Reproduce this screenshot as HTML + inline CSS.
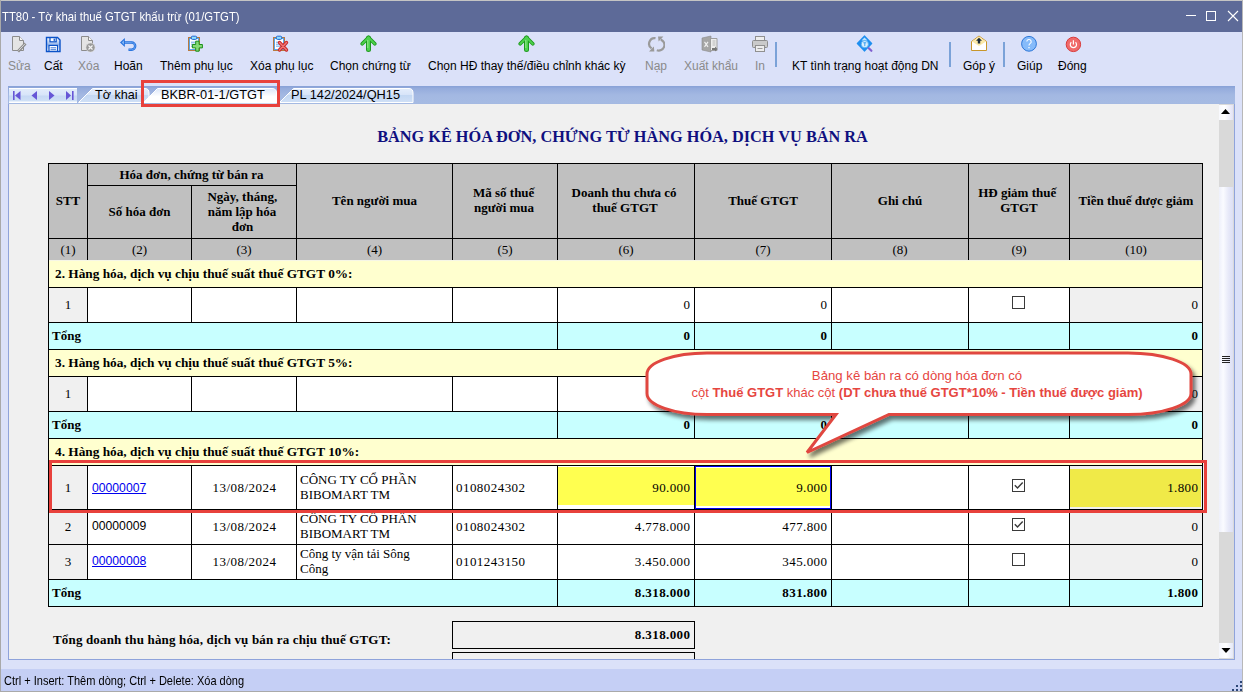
<!DOCTYPE html><html><head><meta charset="utf-8"><style>html,body{margin:0;padding:0;}body{width:1243px;height:692px;position:relative;overflow:hidden;background:#dbe1f9;}</style></head><body><div style="position:absolute;left:0px;top:0px;width:1243px;height:692px;background:#dbe1f9;"></div>
<div style="position:absolute;left:0px;top:0px;width:1243px;height:1px;background:#c4c4c4;"></div>
<div style="position:absolute;left:0px;top:0px;width:1px;height:692px;background:#a9a9a9;"></div>
<div style="position:absolute;left:1242px;top:0px;width:1px;height:692px;background:#b8b8b8;"></div>
<div style="position:absolute;left:1px;top:1px;width:1241px;height:31px;background:#5d6a98;"></div>
<div style="position:absolute;left:2px;top:10.67px;line-height:12.2px;font-family:'Liberation Sans', sans-serif;font-size:12.2px;font-weight:normal;color:#ffffff;white-space:nowrap;transform:scaleX(0.93);transform-origin:0 0;">TT80 - Tờ khai thuế GTGT khấu trừ (01/GTGT)</div>
<div style="position:absolute;left:1186px;top:15px;width:10px;height:1px;background:#ffffff;"></div>
<div style="position:absolute;left:1206px;top:11px;width:8px;height:8px;border:1px solid #fff"></div>
<svg style="position:absolute;left:1227px;top:10px" width="12" height="12"><path d="M1 1 L11 11 M11 1 L1 11" stroke="#fff" stroke-width="1.1"/></svg>
<div style="position:absolute;left:8px;top:59.84px;line-height:12px;font-family:'Liberation Sans', sans-serif;font-size:12px;font-weight:normal;color:#8a8a8a;white-space:nowrap;">Sửa</div>
<div style="position:absolute;left:44px;top:59.84px;line-height:12px;font-family:'Liberation Sans', sans-serif;font-size:12px;font-weight:normal;color:#000;white-space:nowrap;">Cất</div>
<div style="position:absolute;left:78px;top:59.84px;line-height:12px;font-family:'Liberation Sans', sans-serif;font-size:12px;font-weight:normal;color:#8a8a8a;white-space:nowrap;">Xóa</div>
<div style="position:absolute;left:114px;top:59.84px;line-height:12px;font-family:'Liberation Sans', sans-serif;font-size:12px;font-weight:normal;color:#000;white-space:nowrap;">Hoãn</div>
<div style="position:absolute;left:160px;top:59.84px;line-height:12px;font-family:'Liberation Sans', sans-serif;font-size:12px;font-weight:normal;color:#000;white-space:nowrap;">Thêm phụ lục</div>
<div style="position:absolute;left:250px;top:59.84px;line-height:12px;font-family:'Liberation Sans', sans-serif;font-size:12px;font-weight:normal;color:#000;white-space:nowrap;">Xóa phụ lục</div>
<div style="position:absolute;left:330px;top:59.84px;line-height:12px;font-family:'Liberation Sans', sans-serif;font-size:12px;font-weight:normal;color:#000;white-space:nowrap;">Chọn chứng từ</div>
<div style="position:absolute;left:428px;top:59.84px;line-height:12px;font-family:'Liberation Sans', sans-serif;font-size:12px;font-weight:normal;color:#000;white-space:nowrap;">Chọn HĐ thay thế/điều chỉnh khác kỳ</div>
<div style="position:absolute;left:645px;top:59.84px;line-height:12px;font-family:'Liberation Sans', sans-serif;font-size:12px;font-weight:normal;color:#8a8a8a;white-space:nowrap;">Nạp</div>
<div style="position:absolute;left:684px;top:59.84px;line-height:12px;font-family:'Liberation Sans', sans-serif;font-size:12px;font-weight:normal;color:#8a8a8a;white-space:nowrap;">Xuất khẩu</div>
<div style="position:absolute;left:755px;top:59.84px;line-height:12px;font-family:'Liberation Sans', sans-serif;font-size:12px;font-weight:normal;color:#8a8a8a;white-space:nowrap;">In</div>
<div style="position:absolute;left:792px;top:59.84px;line-height:12px;font-family:'Liberation Sans', sans-serif;font-size:12px;font-weight:normal;color:#000;white-space:nowrap;">KT tình trạng hoạt động DN</div>
<div style="position:absolute;left:963px;top:59.84px;line-height:12px;font-family:'Liberation Sans', sans-serif;font-size:12px;font-weight:normal;color:#000;white-space:nowrap;">Góp ý</div>
<div style="position:absolute;left:1017px;top:59.84px;line-height:12px;font-family:'Liberation Sans', sans-serif;font-size:12px;font-weight:normal;color:#000;white-space:nowrap;">Giúp</div>
<div style="position:absolute;left:1058px;top:59.84px;line-height:12px;font-family:'Liberation Sans', sans-serif;font-size:12px;font-weight:normal;color:#000;white-space:nowrap;">Đóng</div>
<div style="position:absolute;left:775px;top:42px;width:2px;height:25px;background:#7ba2d8;"></div>
<div style="position:absolute;left:949px;top:42px;width:2px;height:25px;background:#7ba2d8;"></div>
<div style="position:absolute;left:1003px;top:42px;width:2px;height:25px;background:#7ba2d8;"></div>
<svg style="position:absolute;left:10px;top:35px" width="18" height="18" viewBox="0 0 18 18"><path d="M2.5 1.5h7l4 4v10h-11z" fill="#e4e4e4" stroke="#8c8c8c"/><path d="M9.5 1.5v4h4" fill="#f6f6f6" stroke="#8c8c8c"/><path d="M8 16.5l7.5-8" stroke="#8c8c8c" stroke-width="2.8"/><path d="M8.6 15.6l6.6-7" stroke="#d8d8d8" stroke-width="1"/></svg>
<svg style="position:absolute;left:45px;top:36px" width="18" height="18" viewBox="0 0 18 18"><defs><linearGradient id="fg" x1="0" y1="0" x2="0" y2="1"><stop offset="0" stop-color="#ffffff"/><stop offset="0.5" stop-color="#98b8ea"/><stop offset="1" stop-color="#ffffff"/></linearGradient></defs><path d="M1.5 1.5h11l2.5 2.5v11.5h-13.5z" fill="url(#fg)" stroke="#0a52c8" stroke-width="1.4"/><rect x="5" y="1.6" width="6.2" height="4.2" fill="#fff" stroke="#0a52c8" stroke-width="1.2"/><rect x="8.6" y="2.6" width="1.3" height="2.3" fill="#0a52c8"/><rect x="4" y="9.4" width="8.5" height="6" fill="#fff" stroke="#0a52c8" stroke-width="1.2"/><path d="M5.5 11.8h5.5M5.5 13.7h5.5" stroke="#2a6ad0" stroke-width="0.9"/></svg>
<svg style="position:absolute;left:80px;top:35px" width="18" height="18" viewBox="0 0 18 18"><path d="M1.5 1.5h7l4 4v10h-11z" fill="#e4e4e4" stroke="#8c8c8c"/><path d="M8.5 1.5v4h4" fill="#f6f6f6" stroke="#8c8c8c"/><circle cx="10.5" cy="12.5" r="4.6" fill="#9a9a9a" stroke="#e8e8e8" stroke-width="0.6"/><path d="M8.5 10.5l4 4M12.5 10.5l-4 4" stroke="#f4f4f4" stroke-width="1.2"/></svg>
<svg style="position:absolute;left:119px;top:36px" width="18" height="18" viewBox="0 0 18 18"><path d="M5 6.5H12.6A3.6 3.6 0 0 1 12.6 13.7H9.5" fill="none" stroke="#1f6ddc" stroke-width="2.4"/><path d="M5 6.5H12.6A3.6 3.6 0 0 1 12.6 13.7H9.8" fill="none" stroke="#7fb3f5" stroke-width="0.7"/><path d="M1 6.5L5.8 2v9z" fill="#1f6ddc"/><path d="M2.6 6.5L5 4.3v4.4z" fill="#7fb3f5"/></svg>
<svg style="position:absolute;left:187px;top:35px" width="18" height="18" viewBox="0 0 18 18"><rect x="1.5" y="2.5" width="11" height="13" fill="#c58a50" stroke="#b87a40"/><rect x="2.5" y="3.5" width="9" height="11" fill="#ffffff" stroke="#4aa2f0" stroke-width="0.9"/><rect x="4.3" y="1.2" width="5.4" height="3.2" rx="1.2" fill="#8fe0ff" stroke="#1c64d0" stroke-width="1"/><path d="M4 7.2h5M4 9.2h5M4 11.2h5" stroke="#5aa0e8" stroke-width="0.9"/><path d="M8.7 6.2h3.4v3.3h3.3v3.4h-3.3v3.3h-3.4v-3.3h-3.3v-3.4h3.3z" fill="#86da76" stroke="#1c8f1c" stroke-width="1"/></svg>
<svg style="position:absolute;left:272px;top:35px" width="18" height="18" viewBox="0 0 18 18"><rect x="1.5" y="2.5" width="11" height="13" fill="#c58a50" stroke="#b87a40"/><rect x="2.5" y="3.5" width="9" height="11" fill="#ffffff" stroke="#4aa2f0" stroke-width="0.9"/><rect x="4.3" y="1.2" width="5.4" height="3.2" rx="1.2" fill="#8fe0ff" stroke="#1c64d0" stroke-width="1"/><path d="M4 7.2h5M4 9.2h5M4 11.2h5" stroke="#5aa0e8" stroke-width="0.9"/><path d="M7.5 7.5l7 7.5M14.5 7.5l-7 7.5" stroke="#c82828" stroke-width="3.4" stroke-linecap="round"/><path d="M7.5 7.5l7 7.5M14.5 7.5l-7 7.5" stroke="#f07878" stroke-width="1.4" stroke-linecap="round"/></svg>
<svg style="position:absolute;left:360px;top:35px" width="18" height="18" viewBox="0 0 18 18"><path d="M2.2 8.8L8.5 2.5L14.8 8.8" fill="none" stroke="#1e9a1e" stroke-width="3.6" stroke-linecap="round" stroke-linejoin="round"/><path d="M8.5 3V14.5" stroke="#1e9a1e" stroke-width="5" stroke-linecap="round"/><path d="M2.2 8.8L8.5 2.5L14.8 8.8" fill="none" stroke="#4ed24e" stroke-width="1.8" stroke-linecap="round" stroke-linejoin="round"/><path d="M8.5 3V14.5" stroke="#4ed24e" stroke-width="3" stroke-linecap="round"/><path d="M7.8 5V13" stroke="#a8f0a0" stroke-width="0.8"/></svg>
<svg style="position:absolute;left:518px;top:35px" width="18" height="18" viewBox="0 0 18 18"><path d="M2.2 8.8L8.5 2.5L14.8 8.8" fill="none" stroke="#1e9a1e" stroke-width="3.6" stroke-linecap="round" stroke-linejoin="round"/><path d="M8.5 3V14.5" stroke="#1e9a1e" stroke-width="5" stroke-linecap="round"/><path d="M2.2 8.8L8.5 2.5L14.8 8.8" fill="none" stroke="#4ed24e" stroke-width="1.8" stroke-linecap="round" stroke-linejoin="round"/><path d="M8.5 3V14.5" stroke="#4ed24e" stroke-width="3" stroke-linecap="round"/><path d="M7.8 5V13" stroke="#a8f0a0" stroke-width="0.8"/></svg>
<svg style="position:absolute;left:647px;top:35px" width="18" height="18" viewBox="0 0 18 18"><path d="M8.5 3.2A5.6 5.6 0 0 0 4.6 13.4" fill="none" stroke="#9a9a9a" stroke-width="2.2"/><path d="M9.8 15.2A5.6 5.6 0 0 0 13.8 4.6" fill="none" stroke="#9a9a9a" stroke-width="2.2"/><path d="M2 16.4h5.4l-0.6-5z" fill="#9a9a9a"/><path d="M16.4 1.6h-5.4l0.6 5z" fill="#9a9a9a"/></svg>
<svg style="position:absolute;left:701px;top:35px" width="18" height="18" viewBox="0 0 18 18"><path d="M1 3l9-2v16l-9-2z" fill="#a6a6a6" stroke="#8a8a8a" stroke-width="0.6"/><path d="M10 3.5h6v12h-6" fill="#ececec" stroke="#9e9e9e"/><path d="M3.5 6.8l3.5 5M7 6.8l-3.5 5" stroke="#f0f0f0" stroke-width="1.2"/><path d="M11.5 6h3M11.5 8h3M11.5 10h3" stroke="#b8b8b8"/><path d="M11 13h3v-1.5l2.5 2.5-2.5 2.5v-1.5h-3z" fill="#777"/></svg>
<svg style="position:absolute;left:751px;top:35px" width="18" height="18" viewBox="0 0 18 18"><rect x="4.5" y="1.5" width="9" height="5" fill="#eeeeee" stroke="#909090"/><rect x="1.5" y="5.5" width="15" height="7" rx="1" fill="#cacaca" stroke="#8e8e8e"/><rect x="4.5" y="10.5" width="9" height="6" fill="#ededed" stroke="#909090"/><path d="M6.5 13.5h5" stroke="#9a9a9a"/></svg>
<svg style="position:absolute;left:856px;top:35px" width="18" height="18" viewBox="0 0 18 18"><path d="M8.5 1.2l7 7.3-7 7.3-7-7.3z" fill="#1e8ff0" stroke="#1e8ff0" stroke-width="1.6" stroke-linejoin="round"/><path d="M8.5 2.5l3 3h-6z" fill="#bfe6ff"/><circle cx="8.8" cy="9.2" r="3.6" fill="#d8f0ff" stroke="#4aa8f0" stroke-width="0.8"/><path d="M8.8 7.6v3.6M7.3 7.8h3" stroke="#3aa0f0" stroke-width="1"/><path d="M12.8 13.2l2.6 2.6" stroke="#8060d0" stroke-width="2.2" stroke-linecap="round"/></svg>
<svg style="position:absolute;left:970px;top:35px" width="18" height="18" viewBox="0 0 18 18"><path d="M1.5 6.5l7.5-5.5 7.5 5.5v9h-15z" fill="#ffffff" stroke="#c8962a" stroke-width="1"/><path d="M2 6.5l7-5 7 5l-7 4.5z" fill="#fbe9a8"/><path d="M9 2.8l3 3h-1.8v2.7h-2.4v-2.7h-1.8z" fill="#1a2a3a"/></svg>
<svg style="position:absolute;left:1020px;top:35px" width="18" height="18" viewBox="0 0 18 18"><circle cx="9" cy="8.8" r="7.4" fill="#86bbfa" stroke="#2e78d8" stroke-width="1"/><path d="M6.8 6.6a2.2 2.2 0 1 1 3.2 2c-0.8 0.5-1 0.9-1 2" fill="none" stroke="#fff" stroke-width="1.1"/><rect x="8.4" y="12" width="1.2" height="1.3" fill="#fff"/></svg>
<svg style="position:absolute;left:1065px;top:35px" width="18" height="18" viewBox="0 0 18 18"><circle cx="8.4" cy="9.4" r="7.2" fill="#f06a6a" stroke="#d83a3a" stroke-width="1"/><path d="M6.3 7.3a3.1 3.1 0 1 0 4.2 0" fill="none" stroke="#fff" stroke-width="1.2"/><path d="M8.4 5.2v4.2" stroke="#fff" stroke-width="1.2"/></svg>
<div style="position:absolute;left:8px;top:86px;width:1227px;height:18px;background:linear-gradient(#8aa3d8 0px,#8aa3d8 1px,#94abdc 2px,#a3b8e2 9px,#a6bbe3 18px);"></div>
<div style="position:absolute;left:8px;top:103px;width:1227px;height:1px;background:#a4b9e2;"></div>
<div style="position:absolute;left:9px;top:88px;width:68px;height:15px;background:linear-gradient(#ffffff 0px,#ffffff 1px,#e2ecfb 1px,#d8e5f9 7px,#c6d9f4 8px,#cfe0f6 13px,#ffffff 14px);"></div>
<svg style="position:absolute;left:9px;top:88px" width="70" height="15"><rect x="4" y="3" width="1.6" height="9" fill="#6656d6"/><path d="M11.5 3v9l-5.5-4.5z" fill="#6656d6"/><path d="M28 3v9l-5.5-4.5z" fill="#6656d6"/><path d="M40 3v9l5.5-4.5z" fill="#6656d6"/><path d="M57 3v9l5 -4.5z" fill="#6656d6"/><rect x="63" y="3" width="1.6" height="9" fill="#6656d6"/></svg>
<svg style="position:absolute;left:0;top:86px" width="1243" height="18"><defs><linearGradient id="tg" x1="0" y1="0" x2="0" y2="1"><stop offset="0" stop-color="#e4edfc"/><stop offset="0.5" stop-color="#d6e3f8"/><stop offset="0.5" stop-color="#c4d8f3"/><stop offset="1" stop-color="#d0e0f6"/></linearGradient><linearGradient id="ta" x1="0" y1="0" x2="0" y2="1"><stop offset="0" stop-color="#dbe6f9"/><stop offset="0.55" stop-color="#ffffff"/><stop offset="1" stop-color="#ffffff"/></linearGradient></defs><path d="M78.5 16.5 L92.5 2.5 H145 Q149 2.5 149 7 V16.5 Z" fill="url(#tg)" stroke="#ffffff" stroke-width="1"/><path d="M279.5 16.5 L293.5 2.5 H409 Q413 2.5 413 7 V16.5 Z" fill="url(#tg)" stroke="#ffffff" stroke-width="1"/><path d="M143.5 16.5 L157.5 2.5 H272 Q276.5 2.5 276.5 7 V17 Z" fill="url(#ta)" stroke="#ffffff" stroke-width="1"/></svg>
<div style="position:absolute;left:95px;top:89.33px;line-height:12.6px;font-family:'Liberation Sans', sans-serif;font-size:12.6px;font-weight:normal;color:#000;white-space:nowrap;">Tờ khai</div>
<div style="position:absolute;left:161px;top:89.16px;line-height:12.8px;font-family:'Liberation Sans', sans-serif;font-size:12.8px;font-weight:normal;color:#000;white-space:nowrap;">BKBR-01-1/GTGT</div>
<div style="position:absolute;left:291px;top:89.16px;line-height:12.8px;font-family:'Liberation Sans', sans-serif;font-size:12.8px;font-weight:normal;color:#000;white-space:nowrap;">PL 142/2024/QH15</div>
<div style="position:absolute;left:8px;top:104px;width:1227px;height:556px;background:#8fa3db;"></div>
<div style="position:absolute;left:9px;top:104px;width:1225px;height:555px;background:#f0f0f0;"></div>
<div style="position:absolute;left:322.5px;width:600px;top:129.35px;line-height:16.3px;font-family:'Liberation Serif', serif;font-size:16.3px;font-weight:bold;color:#10107f;white-space:nowrap;text-align:center;">BẢNG KÊ HÓA ĐƠN, CHỨNG TỪ HÀNG HÓA, DỊCH VỤ BÁN RA</div>
<div style="position:absolute;left:48px;top:163px;width:1155px;height:97px;background:#c0c0c0;"></div>
<div style="position:absolute;left:48px;top:163px;width:1155px;height:1px;background:#000;"></div>
<div style="position:absolute;left:87px;top:185px;width:210px;height:1px;background:#000;"></div>
<div style="position:absolute;left:48px;top:238px;width:1155px;height:1px;background:#000;"></div>
<div style="position:absolute;left:48px;top:163px;width:1px;height:98px;background:#000;"></div>
<div style="position:absolute;left:87px;top:163px;width:1px;height:98px;background:#000;"></div>
<div style="position:absolute;left:191px;top:185px;width:1px;height:76px;background:#000;"></div>
<div style="position:absolute;left:296px;top:163px;width:1px;height:98px;background:#000;"></div>
<div style="position:absolute;left:452px;top:163px;width:1px;height:98px;background:#000;"></div>
<div style="position:absolute;left:557px;top:163px;width:1px;height:98px;background:#000;"></div>
<div style="position:absolute;left:694px;top:163px;width:1px;height:98px;background:#000;"></div>
<div style="position:absolute;left:831px;top:163px;width:1px;height:98px;background:#000;"></div>
<div style="position:absolute;left:968px;top:163px;width:1px;height:98px;background:#000;"></div>
<div style="position:absolute;left:1069px;top:163px;width:1px;height:98px;background:#000;"></div>
<div style="position:absolute;left:1202px;top:163px;width:1px;height:98px;background:#000;"></div>
<div style="position:absolute;left:-232.0px;width:600px;top:194.11px;line-height:13px;font-family:'Liberation Serif', serif;font-size:13px;font-weight:bold;color:#000;white-space:nowrap;text-align:center;">STT</div>
<div style="position:absolute;left:-108.5px;width:600px;top:168.11px;line-height:13px;font-family:'Liberation Serif', serif;font-size:13px;font-weight:bold;color:#000;white-space:nowrap;text-align:center;">Hóa đơn, chứng từ bán ra</div>
<div style="position:absolute;left:-160.5px;width:600px;top:205.11px;line-height:13px;font-family:'Liberation Serif', serif;font-size:13px;font-weight:bold;color:#000;white-space:nowrap;text-align:center;">Số hóa đơn</div>
<div style="position:absolute;left:-57.69999999999999px;width:600px;top:190.11px;line-height:13px;font-family:'Liberation Serif', serif;font-size:13px;font-weight:bold;color:#000;white-space:nowrap;text-align:center;">Ngày, tháng,</div>
<div style="position:absolute;left:-58.0px;width:600px;top:205.11px;line-height:13px;font-family:'Liberation Serif', serif;font-size:13px;font-weight:bold;color:#000;white-space:nowrap;text-align:center;">năm lập hóa</div>
<div style="position:absolute;left:-57.5px;width:600px;top:220.11px;line-height:13px;font-family:'Liberation Serif', serif;font-size:13px;font-weight:bold;color:#000;white-space:nowrap;text-align:center;">đơn</div>
<div style="position:absolute;left:74.5px;width:600px;top:194.11px;line-height:13px;font-family:'Liberation Serif', serif;font-size:13px;font-weight:bold;color:#000;white-space:nowrap;text-align:center;">Tên người mua</div>
<div style="position:absolute;left:203.7px;width:600px;top:186.11px;line-height:13px;font-family:'Liberation Serif', serif;font-size:13px;font-weight:bold;color:#000;white-space:nowrap;text-align:center;">Mã số thuế</div>
<div style="position:absolute;left:204.0px;width:600px;top:201.11px;line-height:13px;font-family:'Liberation Serif', serif;font-size:13px;font-weight:bold;color:#000;white-space:nowrap;text-align:center;">người mua</div>
<div style="position:absolute;left:324.0px;width:600px;top:186.11px;line-height:13px;font-family:'Liberation Serif', serif;font-size:13px;font-weight:bold;color:#000;white-space:nowrap;text-align:center;">Doanh thu chưa có</div>
<div style="position:absolute;left:325.0px;width:600px;top:201.11px;line-height:13px;font-family:'Liberation Serif', serif;font-size:13px;font-weight:bold;color:#000;white-space:nowrap;text-align:center;">thuế GTGT</div>
<div style="position:absolute;left:463.0px;width:600px;top:194.11px;line-height:13px;font-family:'Liberation Serif', serif;font-size:13px;font-weight:bold;color:#000;white-space:nowrap;text-align:center;">Thuế GTGT</div>
<div style="position:absolute;left:600.0px;width:600px;top:194.11px;line-height:13px;font-family:'Liberation Serif', serif;font-size:13px;font-weight:bold;color:#000;white-space:nowrap;text-align:center;">Ghi chú</div>
<div style="position:absolute;left:717.2px;width:600px;top:186.11px;line-height:13px;font-family:'Liberation Serif', serif;font-size:13px;font-weight:bold;color:#000;white-space:nowrap;text-align:center;">HĐ giảm thuế</div>
<div style="position:absolute;left:719.0px;width:600px;top:201.11px;line-height:13px;font-family:'Liberation Serif', serif;font-size:13px;font-weight:bold;color:#000;white-space:nowrap;text-align:center;">GTGT</div>
<div style="position:absolute;left:836.0px;width:600px;top:194.11px;line-height:13px;font-family:'Liberation Serif', serif;font-size:13px;font-weight:bold;color:#000;white-space:nowrap;text-align:center;">Tiền thuế được giảm</div>
<div style="position:absolute;left:-232.0px;width:600px;top:243.11px;line-height:13px;font-family:'Liberation Serif', serif;font-size:13px;font-weight:normal;color:#000;white-space:nowrap;text-align:center;">(1)</div>
<div style="position:absolute;left:-160.5px;width:600px;top:243.11px;line-height:13px;font-family:'Liberation Serif', serif;font-size:13px;font-weight:normal;color:#000;white-space:nowrap;text-align:center;">(2)</div>
<div style="position:absolute;left:-56.0px;width:600px;top:243.11px;line-height:13px;font-family:'Liberation Serif', serif;font-size:13px;font-weight:normal;color:#000;white-space:nowrap;text-align:center;">(3)</div>
<div style="position:absolute;left:74.5px;width:600px;top:243.11px;line-height:13px;font-family:'Liberation Serif', serif;font-size:13px;font-weight:normal;color:#000;white-space:nowrap;text-align:center;">(4)</div>
<div style="position:absolute;left:205.0px;width:600px;top:243.11px;line-height:13px;font-family:'Liberation Serif', serif;font-size:13px;font-weight:normal;color:#000;white-space:nowrap;text-align:center;">(5)</div>
<div style="position:absolute;left:326.0px;width:600px;top:243.11px;line-height:13px;font-family:'Liberation Serif', serif;font-size:13px;font-weight:normal;color:#000;white-space:nowrap;text-align:center;">(6)</div>
<div style="position:absolute;left:463.0px;width:600px;top:243.11px;line-height:13px;font-family:'Liberation Serif', serif;font-size:13px;font-weight:normal;color:#000;white-space:nowrap;text-align:center;">(7)</div>
<div style="position:absolute;left:600.0px;width:600px;top:243.11px;line-height:13px;font-family:'Liberation Serif', serif;font-size:13px;font-weight:normal;color:#000;white-space:nowrap;text-align:center;">(8)</div>
<div style="position:absolute;left:719.0px;width:600px;top:243.11px;line-height:13px;font-family:'Liberation Serif', serif;font-size:13px;font-weight:normal;color:#000;white-space:nowrap;text-align:center;">(9)</div>
<div style="position:absolute;left:836.0px;width:600px;top:243.11px;line-height:13px;font-family:'Liberation Serif', serif;font-size:13px;font-weight:normal;color:#000;white-space:nowrap;text-align:center;">(10)</div>
<div style="position:absolute;left:48px;top:260px;width:1155px;height:1px;background:#f6f6e6;"></div>
<div style="position:absolute;left:48px;top:261px;width:1155px;height:26px;background:#ffffcf;"></div>
<div style="position:absolute;left:48px;top:260px;width:1px;height:28px;background:#000;"></div>
<div style="position:absolute;left:1202px;top:260px;width:1px;height:28px;background:#000;"></div>
<div style="position:absolute;left:48px;top:287px;width:1155px;height:1px;background:#000;"></div>
<div style="position:absolute;left:55px;top:266.86px;line-height:13.3px;font-family:'Liberation Serif', serif;font-size:13.3px;font-weight:bold;color:#000;white-space:nowrap;">2. Hàng hóa, dịch vụ chịu thuế suất thuế GTGT 0%:</div>
<div style="position:absolute;left:48px;top:288px;width:1155px;height:34px;background:#ffffff;"></div>
<div style="position:absolute;left:49px;top:288px;width:38px;height:34px;background:#f0f0f0;"></div>
<div style="position:absolute;left:1070px;top:288px;width:132px;height:34px;background:#f0f0f0;"></div>
<div style="position:absolute;left:48px;top:287px;width:1px;height:36px;background:#000;"></div>
<div style="position:absolute;left:87px;top:287px;width:1px;height:36px;background:#000;"></div>
<div style="position:absolute;left:191px;top:287px;width:1px;height:36px;background:#000;"></div>
<div style="position:absolute;left:296px;top:287px;width:1px;height:36px;background:#000;"></div>
<div style="position:absolute;left:452px;top:287px;width:1px;height:36px;background:#000;"></div>
<div style="position:absolute;left:557px;top:287px;width:1px;height:36px;background:#000;"></div>
<div style="position:absolute;left:694px;top:287px;width:1px;height:36px;background:#000;"></div>
<div style="position:absolute;left:831px;top:287px;width:1px;height:36px;background:#000;"></div>
<div style="position:absolute;left:968px;top:287px;width:1px;height:36px;background:#000;"></div>
<div style="position:absolute;left:1069px;top:287px;width:1px;height:36px;background:#000;"></div>
<div style="position:absolute;left:1202px;top:287px;width:1px;height:36px;background:#000;"></div>
<div style="position:absolute;left:48px;top:322px;width:1155px;height:1px;background:#000;"></div>
<div style="position:absolute;left:-232.0px;width:600px;top:297.61px;line-height:13px;font-family:'Liberation Serif', serif;font-size:13px;font-weight:normal;color:#000;white-space:nowrap;text-align:center;">1</div>
<div style="position:absolute;left:290.4px;width:400px;top:297.61px;line-height:13px;font-family:'Liberation Serif', serif;font-size:13px;font-weight:normal;color:#000;white-space:nowrap;text-align:right;letter-spacing:0.4px;">0</div>
<div style="position:absolute;left:427.4px;width:400px;top:297.61px;line-height:13px;font-family:'Liberation Serif', serif;font-size:13px;font-weight:normal;color:#000;white-space:nowrap;text-align:right;letter-spacing:0.4px;">0</div>
<div style="position:absolute;left:798.4px;width:400px;top:297.61px;line-height:13px;font-family:'Liberation Serif', serif;font-size:13px;font-weight:normal;color:#000;white-space:nowrap;text-align:right;letter-spacing:0.4px;">0</div>
<div style="position:absolute;left:1012.0px;top:295.5px;width:11px;height:11px;border:1px solid #3a3a3a;background:#fff;"></div>
<div style="position:absolute;left:48px;top:323px;width:1155px;height:26px;background:#c8ffff;"></div>
<div style="position:absolute;left:48px;top:322px;width:1px;height:28px;background:#000;"></div>
<div style="position:absolute;left:557px;top:322px;width:1px;height:28px;background:#000;"></div>
<div style="position:absolute;left:694px;top:322px;width:1px;height:28px;background:#000;"></div>
<div style="position:absolute;left:831px;top:322px;width:1px;height:28px;background:#000;"></div>
<div style="position:absolute;left:968px;top:322px;width:1px;height:28px;background:#000;"></div>
<div style="position:absolute;left:1069px;top:322px;width:1px;height:28px;background:#000;"></div>
<div style="position:absolute;left:1202px;top:322px;width:1px;height:28px;background:#000;"></div>
<div style="position:absolute;left:48px;top:349px;width:1155px;height:1px;background:#000;"></div>
<div style="position:absolute;left:52px;top:329.11px;line-height:13px;font-family:'Liberation Serif', serif;font-size:13px;font-weight:bold;color:#000;white-space:nowrap;">Tổng</div>
<div style="position:absolute;left:290.4px;width:400px;top:329.11px;line-height:13px;font-family:'Liberation Serif', serif;font-size:13px;font-weight:bold;color:#000;white-space:nowrap;text-align:right;letter-spacing:0.4px;">0</div>
<div style="position:absolute;left:427.4px;width:400px;top:329.11px;line-height:13px;font-family:'Liberation Serif', serif;font-size:13px;font-weight:bold;color:#000;white-space:nowrap;text-align:right;letter-spacing:0.4px;">0</div>
<div style="position:absolute;left:798.4px;width:400px;top:329.11px;line-height:13px;font-family:'Liberation Serif', serif;font-size:13px;font-weight:bold;color:#000;white-space:nowrap;text-align:right;letter-spacing:0.4px;">0</div>
<div style="position:absolute;left:48px;top:350px;width:1155px;height:26px;background:#ffffcf;"></div>
<div style="position:absolute;left:48px;top:349px;width:1px;height:28px;background:#000;"></div>
<div style="position:absolute;left:1202px;top:349px;width:1px;height:28px;background:#000;"></div>
<div style="position:absolute;left:48px;top:376px;width:1155px;height:1px;background:#000;"></div>
<div style="position:absolute;left:55px;top:355.86px;line-height:13.3px;font-family:'Liberation Serif', serif;font-size:13.3px;font-weight:bold;color:#000;white-space:nowrap;">3. Hàng hóa, dịch vụ chịu thuế suất thuế GTGT 5%:</div>
<div style="position:absolute;left:48px;top:377px;width:1155px;height:34px;background:#ffffff;"></div>
<div style="position:absolute;left:49px;top:377px;width:38px;height:34px;background:#f0f0f0;"></div>
<div style="position:absolute;left:1070px;top:377px;width:132px;height:34px;background:#f0f0f0;"></div>
<div style="position:absolute;left:48px;top:376px;width:1px;height:36px;background:#000;"></div>
<div style="position:absolute;left:87px;top:376px;width:1px;height:36px;background:#000;"></div>
<div style="position:absolute;left:191px;top:376px;width:1px;height:36px;background:#000;"></div>
<div style="position:absolute;left:296px;top:376px;width:1px;height:36px;background:#000;"></div>
<div style="position:absolute;left:452px;top:376px;width:1px;height:36px;background:#000;"></div>
<div style="position:absolute;left:557px;top:376px;width:1px;height:36px;background:#000;"></div>
<div style="position:absolute;left:694px;top:376px;width:1px;height:36px;background:#000;"></div>
<div style="position:absolute;left:831px;top:376px;width:1px;height:36px;background:#000;"></div>
<div style="position:absolute;left:968px;top:376px;width:1px;height:36px;background:#000;"></div>
<div style="position:absolute;left:1069px;top:376px;width:1px;height:36px;background:#000;"></div>
<div style="position:absolute;left:1202px;top:376px;width:1px;height:36px;background:#000;"></div>
<div style="position:absolute;left:48px;top:411px;width:1155px;height:1px;background:#000;"></div>
<div style="position:absolute;left:-232.0px;width:600px;top:386.61px;line-height:13px;font-family:'Liberation Serif', serif;font-size:13px;font-weight:normal;color:#000;white-space:nowrap;text-align:center;">1</div>
<div style="position:absolute;left:290.4px;width:400px;top:386.61px;line-height:13px;font-family:'Liberation Serif', serif;font-size:13px;font-weight:normal;color:#000;white-space:nowrap;text-align:right;letter-spacing:0.4px;">0</div>
<div style="position:absolute;left:427.4px;width:400px;top:386.61px;line-height:13px;font-family:'Liberation Serif', serif;font-size:13px;font-weight:normal;color:#000;white-space:nowrap;text-align:right;letter-spacing:0.4px;">0</div>
<div style="position:absolute;left:798.4px;width:400px;top:386.61px;line-height:13px;font-family:'Liberation Serif', serif;font-size:13px;font-weight:normal;color:#000;white-space:nowrap;text-align:right;letter-spacing:0.4px;">0</div>
<div style="position:absolute;left:1012.0px;top:384.5px;width:11px;height:11px;border:1px solid #3a3a3a;background:#fff;"></div>
<div style="position:absolute;left:48px;top:412px;width:1155px;height:26px;background:#c8ffff;"></div>
<div style="position:absolute;left:48px;top:411px;width:1px;height:28px;background:#000;"></div>
<div style="position:absolute;left:557px;top:411px;width:1px;height:28px;background:#000;"></div>
<div style="position:absolute;left:694px;top:411px;width:1px;height:28px;background:#000;"></div>
<div style="position:absolute;left:831px;top:411px;width:1px;height:28px;background:#000;"></div>
<div style="position:absolute;left:968px;top:411px;width:1px;height:28px;background:#000;"></div>
<div style="position:absolute;left:1069px;top:411px;width:1px;height:28px;background:#000;"></div>
<div style="position:absolute;left:1202px;top:411px;width:1px;height:28px;background:#000;"></div>
<div style="position:absolute;left:48px;top:438px;width:1155px;height:1px;background:#000;"></div>
<div style="position:absolute;left:52px;top:418.11px;line-height:13px;font-family:'Liberation Serif', serif;font-size:13px;font-weight:bold;color:#000;white-space:nowrap;">Tổng</div>
<div style="position:absolute;left:290.4px;width:400px;top:418.11px;line-height:13px;font-family:'Liberation Serif', serif;font-size:13px;font-weight:bold;color:#000;white-space:nowrap;text-align:right;letter-spacing:0.4px;">0</div>
<div style="position:absolute;left:427.4px;width:400px;top:418.11px;line-height:13px;font-family:'Liberation Serif', serif;font-size:13px;font-weight:bold;color:#000;white-space:nowrap;text-align:right;letter-spacing:0.4px;">0</div>
<div style="position:absolute;left:798.4px;width:400px;top:418.11px;line-height:13px;font-family:'Liberation Serif', serif;font-size:13px;font-weight:bold;color:#000;white-space:nowrap;text-align:right;letter-spacing:0.4px;">0</div>
<div style="position:absolute;left:48px;top:439px;width:1155px;height:26px;background:#ffffcf;"></div>
<div style="position:absolute;left:48px;top:438px;width:1px;height:28px;background:#000;"></div>
<div style="position:absolute;left:1202px;top:438px;width:1px;height:28px;background:#000;"></div>
<div style="position:absolute;left:48px;top:465px;width:1155px;height:1px;background:#000;"></div>
<div style="position:absolute;left:55px;top:444.86px;line-height:13.3px;font-family:'Liberation Serif', serif;font-size:13.3px;font-weight:bold;color:#000;white-space:nowrap;">4. Hàng hóa, dịch vụ chịu thuế suất thuế GTGT 10%:</div>
<div style="position:absolute;left:48px;top:466px;width:1155px;height:43px;background:#ffffff;"></div>
<div style="position:absolute;left:49px;top:466px;width:38px;height:43px;background:#f0f0f0;"></div>
<div style="position:absolute;left:1070px;top:466px;width:132px;height:43px;background:#f0f0f0;"></div>
<div style="position:absolute;left:48px;top:465px;width:1px;height:45px;background:#000;"></div>
<div style="position:absolute;left:87px;top:465px;width:1px;height:45px;background:#000;"></div>
<div style="position:absolute;left:191px;top:465px;width:1px;height:45px;background:#000;"></div>
<div style="position:absolute;left:296px;top:465px;width:1px;height:45px;background:#000;"></div>
<div style="position:absolute;left:452px;top:465px;width:1px;height:45px;background:#000;"></div>
<div style="position:absolute;left:557px;top:465px;width:1px;height:45px;background:#000;"></div>
<div style="position:absolute;left:694px;top:465px;width:1px;height:45px;background:#000;"></div>
<div style="position:absolute;left:831px;top:465px;width:1px;height:45px;background:#000;"></div>
<div style="position:absolute;left:968px;top:465px;width:1px;height:45px;background:#000;"></div>
<div style="position:absolute;left:1069px;top:465px;width:1px;height:45px;background:#000;"></div>
<div style="position:absolute;left:1202px;top:465px;width:1px;height:45px;background:#000;"></div>
<div style="position:absolute;left:48px;top:509px;width:1155px;height:1px;background:#000;"></div>
<div style="position:absolute;left:558px;top:467px;width:136px;height:38px;background:#ffff50;"></div>
<div style="position:absolute;left:695px;top:466px;width:134px;height:41px;border:1px solid #0000f0;background:#ffffff;"></div>
<div style="position:absolute;left:696px;top:468px;width:134px;height:38px;background:#ffff50;"></div>
<div style="position:absolute;left:1070px;top:469px;width:131px;height:38px;background:#f0ea48;"></div>
<div style="position:absolute;left:-232.0px;width:600px;top:481.11px;line-height:13px;font-family:'Liberation Serif', serif;font-size:13px;font-weight:normal;color:#000;white-space:nowrap;text-align:center;">1</div>
<div style="position:absolute;left:92px;top:481.67px;line-height:12.2px;font-family:'Liberation Sans', sans-serif;font-size:12.2px;font-weight:normal;color:#0000ee;white-space:nowrap;text-decoration:underline;">00000007</div>
<div style="position:absolute;left:-55.5px;width:600px;top:481.11px;line-height:13px;font-family:'Liberation Serif', serif;font-size:13px;font-weight:normal;color:#000;white-space:nowrap;text-align:center;letter-spacing:0.5px;">13/08/2024</div>
<div style="position:absolute;left:300px;top:473.11px;line-height:13px;font-family:'Liberation Serif', serif;font-size:13px;font-weight:normal;color:#000;white-space:nowrap;">CÔNG TY CỔ PHẦN</div>
<div style="position:absolute;left:300px;top:488.11px;line-height:13px;font-family:'Liberation Serif', serif;font-size:13px;font-weight:normal;color:#000;white-space:nowrap;">BIBOMART TM</div>
<div style="position:absolute;left:456px;top:481.11px;line-height:13px;font-family:'Liberation Serif', serif;font-size:13px;font-weight:normal;color:#000;white-space:nowrap;letter-spacing:0.45px;">0108024302</div>
<div style="position:absolute;left:290.4px;width:400px;top:481.11px;line-height:13px;font-family:'Liberation Serif', serif;font-size:13px;font-weight:normal;color:#000;white-space:nowrap;text-align:right;letter-spacing:0.4px;">90.000</div>
<div style="position:absolute;left:427.4px;width:400px;top:481.11px;line-height:13px;font-family:'Liberation Serif', serif;font-size:13px;font-weight:normal;color:#000;white-space:nowrap;text-align:right;letter-spacing:0.4px;">9.000</div>
<div style="position:absolute;left:798.4px;width:400px;top:481.11px;line-height:13px;font-family:'Liberation Serif', serif;font-size:13px;font-weight:normal;color:#000;white-space:nowrap;text-align:right;letter-spacing:0.4px;">1.800</div>
<div style="position:absolute;left:1012.0px;top:479px;width:11px;height:11px;border:1px solid #3a3a3a;background:#fff;"></div>
<svg style="position:absolute;left:1012.0px;top:479px" width="13" height="13"><path d="M2.8 6.3l2.7 2.7 5.2-5.6" fill="none" stroke="#3a3a3a" stroke-width="1.4"/></svg>
<div style="position:absolute;left:48px;top:510px;width:1155px;height:34px;background:#ffffff;"></div>
<div style="position:absolute;left:49px;top:510px;width:38px;height:34px;background:#f0f0f0;"></div>
<div style="position:absolute;left:1070px;top:510px;width:132px;height:34px;background:#f0f0f0;"></div>
<div style="position:absolute;left:48px;top:509px;width:1px;height:36px;background:#000;"></div>
<div style="position:absolute;left:87px;top:509px;width:1px;height:36px;background:#000;"></div>
<div style="position:absolute;left:191px;top:509px;width:1px;height:36px;background:#000;"></div>
<div style="position:absolute;left:296px;top:509px;width:1px;height:36px;background:#000;"></div>
<div style="position:absolute;left:452px;top:509px;width:1px;height:36px;background:#000;"></div>
<div style="position:absolute;left:557px;top:509px;width:1px;height:36px;background:#000;"></div>
<div style="position:absolute;left:694px;top:509px;width:1px;height:36px;background:#000;"></div>
<div style="position:absolute;left:831px;top:509px;width:1px;height:36px;background:#000;"></div>
<div style="position:absolute;left:968px;top:509px;width:1px;height:36px;background:#000;"></div>
<div style="position:absolute;left:1069px;top:509px;width:1px;height:36px;background:#000;"></div>
<div style="position:absolute;left:1202px;top:509px;width:1px;height:36px;background:#000;"></div>
<div style="position:absolute;left:48px;top:544px;width:1155px;height:1px;background:#000;"></div>
<div style="position:absolute;left:-232.0px;width:600px;top:519.61px;line-height:13px;font-family:'Liberation Serif', serif;font-size:13px;font-weight:normal;color:#000;white-space:nowrap;text-align:center;">2</div>
<div style="position:absolute;left:92px;top:520.17px;line-height:12.2px;font-family:'Liberation Sans', sans-serif;font-size:12.2px;font-weight:normal;color:#000;white-space:nowrap;">00000009</div>
<div style="position:absolute;left:-55.5px;width:600px;top:519.61px;line-height:13px;font-family:'Liberation Serif', serif;font-size:13px;font-weight:normal;color:#000;white-space:nowrap;text-align:center;letter-spacing:0.5px;">13/08/2024</div>
<div style="position:absolute;left:300px;top:511.61px;line-height:13px;font-family:'Liberation Serif', serif;font-size:13px;font-weight:normal;color:#000;white-space:nowrap;">CÔNG TY CỔ PHẦN</div>
<div style="position:absolute;left:300px;top:526.61px;line-height:13px;font-family:'Liberation Serif', serif;font-size:13px;font-weight:normal;color:#000;white-space:nowrap;">BIBOMART TM</div>
<div style="position:absolute;left:456px;top:519.61px;line-height:13px;font-family:'Liberation Serif', serif;font-size:13px;font-weight:normal;color:#000;white-space:nowrap;letter-spacing:0.45px;">0108024302</div>
<div style="position:absolute;left:290.4px;width:400px;top:519.61px;line-height:13px;font-family:'Liberation Serif', serif;font-size:13px;font-weight:normal;color:#000;white-space:nowrap;text-align:right;letter-spacing:0.4px;">4.778.000</div>
<div style="position:absolute;left:427.4px;width:400px;top:519.61px;line-height:13px;font-family:'Liberation Serif', serif;font-size:13px;font-weight:normal;color:#000;white-space:nowrap;text-align:right;letter-spacing:0.4px;">477.800</div>
<div style="position:absolute;left:798.4px;width:400px;top:519.61px;line-height:13px;font-family:'Liberation Serif', serif;font-size:13px;font-weight:normal;color:#000;white-space:nowrap;text-align:right;letter-spacing:0.4px;">0</div>
<div style="position:absolute;left:1012.0px;top:517.5px;width:11px;height:11px;border:1px solid #3a3a3a;background:#fff;"></div>
<svg style="position:absolute;left:1012.0px;top:517.5px" width="13" height="13"><path d="M2.8 6.3l2.7 2.7 5.2-5.6" fill="none" stroke="#3a3a3a" stroke-width="1.4"/></svg>
<div style="position:absolute;left:48px;top:545px;width:1155px;height:34px;background:#ffffff;"></div>
<div style="position:absolute;left:49px;top:545px;width:38px;height:34px;background:#f0f0f0;"></div>
<div style="position:absolute;left:1070px;top:545px;width:132px;height:34px;background:#f0f0f0;"></div>
<div style="position:absolute;left:48px;top:544px;width:1px;height:36px;background:#000;"></div>
<div style="position:absolute;left:87px;top:544px;width:1px;height:36px;background:#000;"></div>
<div style="position:absolute;left:191px;top:544px;width:1px;height:36px;background:#000;"></div>
<div style="position:absolute;left:296px;top:544px;width:1px;height:36px;background:#000;"></div>
<div style="position:absolute;left:452px;top:544px;width:1px;height:36px;background:#000;"></div>
<div style="position:absolute;left:557px;top:544px;width:1px;height:36px;background:#000;"></div>
<div style="position:absolute;left:694px;top:544px;width:1px;height:36px;background:#000;"></div>
<div style="position:absolute;left:831px;top:544px;width:1px;height:36px;background:#000;"></div>
<div style="position:absolute;left:968px;top:544px;width:1px;height:36px;background:#000;"></div>
<div style="position:absolute;left:1069px;top:544px;width:1px;height:36px;background:#000;"></div>
<div style="position:absolute;left:1202px;top:544px;width:1px;height:36px;background:#000;"></div>
<div style="position:absolute;left:48px;top:579px;width:1155px;height:1px;background:#000;"></div>
<div style="position:absolute;left:-232.0px;width:600px;top:554.61px;line-height:13px;font-family:'Liberation Serif', serif;font-size:13px;font-weight:normal;color:#000;white-space:nowrap;text-align:center;">3</div>
<div style="position:absolute;left:92px;top:555.17px;line-height:12.2px;font-family:'Liberation Sans', sans-serif;font-size:12.2px;font-weight:normal;color:#0000ee;white-space:nowrap;text-decoration:underline;">00000008</div>
<div style="position:absolute;left:-55.5px;width:600px;top:554.61px;line-height:13px;font-family:'Liberation Serif', serif;font-size:13px;font-weight:normal;color:#000;white-space:nowrap;text-align:center;letter-spacing:0.5px;">13/08/2024</div>
<div style="position:absolute;left:300px;top:546.61px;line-height:13px;font-family:'Liberation Serif', serif;font-size:13px;font-weight:normal;color:#000;white-space:nowrap;">Công ty vận tải Sông</div>
<div style="position:absolute;left:300px;top:561.61px;line-height:13px;font-family:'Liberation Serif', serif;font-size:13px;font-weight:normal;color:#000;white-space:nowrap;">Công</div>
<div style="position:absolute;left:456px;top:554.61px;line-height:13px;font-family:'Liberation Serif', serif;font-size:13px;font-weight:normal;color:#000;white-space:nowrap;letter-spacing:0.45px;">0101243150</div>
<div style="position:absolute;left:290.4px;width:400px;top:554.61px;line-height:13px;font-family:'Liberation Serif', serif;font-size:13px;font-weight:normal;color:#000;white-space:nowrap;text-align:right;letter-spacing:0.4px;">3.450.000</div>
<div style="position:absolute;left:427.4px;width:400px;top:554.61px;line-height:13px;font-family:'Liberation Serif', serif;font-size:13px;font-weight:normal;color:#000;white-space:nowrap;text-align:right;letter-spacing:0.4px;">345.000</div>
<div style="position:absolute;left:798.4px;width:400px;top:554.61px;line-height:13px;font-family:'Liberation Serif', serif;font-size:13px;font-weight:normal;color:#000;white-space:nowrap;text-align:right;letter-spacing:0.4px;">0</div>
<div style="position:absolute;left:1012.0px;top:552.5px;width:11px;height:11px;border:1px solid #3a3a3a;background:#fff;"></div>
<div style="position:absolute;left:48px;top:580px;width:1155px;height:26px;background:#c8ffff;"></div>
<div style="position:absolute;left:48px;top:579px;width:1px;height:28px;background:#000;"></div>
<div style="position:absolute;left:557px;top:579px;width:1px;height:28px;background:#000;"></div>
<div style="position:absolute;left:694px;top:579px;width:1px;height:28px;background:#000;"></div>
<div style="position:absolute;left:831px;top:579px;width:1px;height:28px;background:#000;"></div>
<div style="position:absolute;left:968px;top:579px;width:1px;height:28px;background:#000;"></div>
<div style="position:absolute;left:1069px;top:579px;width:1px;height:28px;background:#000;"></div>
<div style="position:absolute;left:1202px;top:579px;width:1px;height:28px;background:#000;"></div>
<div style="position:absolute;left:48px;top:606px;width:1155px;height:1px;background:#000;"></div>
<div style="position:absolute;left:52px;top:586.11px;line-height:13px;font-family:'Liberation Serif', serif;font-size:13px;font-weight:bold;color:#000;white-space:nowrap;">Tổng</div>
<div style="position:absolute;left:290.4px;width:400px;top:586.11px;line-height:13px;font-family:'Liberation Serif', serif;font-size:13px;font-weight:bold;color:#000;white-space:nowrap;text-align:right;letter-spacing:0.4px;">8.318.000</div>
<div style="position:absolute;left:427.4px;width:400px;top:586.11px;line-height:13px;font-family:'Liberation Serif', serif;font-size:13px;font-weight:bold;color:#000;white-space:nowrap;text-align:right;letter-spacing:0.4px;">831.800</div>
<div style="position:absolute;left:798.4px;width:400px;top:586.11px;line-height:13px;font-family:'Liberation Serif', serif;font-size:13px;font-weight:bold;color:#000;white-space:nowrap;text-align:right;letter-spacing:0.4px;">1.800</div>
<div style="position:absolute;left:49px;top:460px;width:1152px;height:47px;border:3px solid #e8413c;"></div>
<div style="position:absolute;left:53px;top:633.11px;line-height:13px;font-family:'Liberation Serif', serif;font-size:13px;font-weight:bold;color:#000;white-space:nowrap;letter-spacing:0.16px;">Tổng doanh thu hàng hóa, dịch vụ bán ra chịu thuế GTGT:</div>
<div style="position:absolute;left:452px;top:621px;width:241px;height:26px;border:1px solid #000;background:#f0f0f0;"></div>
<div style="position:absolute;left:290.4px;width:400px;top:628.11px;line-height:13px;font-family:'Liberation Serif', serif;font-size:13px;font-weight:bold;color:#000;white-space:nowrap;text-align:right;letter-spacing:0.4px;">8.318.000</div>
<div style="position:absolute;left:452px;top:652px;width:241px;height:20px;border:1px solid #000;background:#f0f0f0;"></div>
<div style="position:absolute;left:8px;top:659px;width:1227px;height:1px;background:#8fa3db;"></div>
<div style="position:absolute;left:1px;top:660px;width:1241px;height:9px;background:#dbe1f9;"></div>
<div style="position:absolute;left:1px;top:669px;width:1241px;height:22px;background:#c5cff5;"></div>
<div style="position:absolute;left:0px;top:691px;width:1243px;height:1px;background:#a9a9a9;"></div>
<div style="position:absolute;left:4px;top:674.67px;line-height:12.2px;font-family:'Liberation Sans', sans-serif;font-size:12.2px;font-weight:normal;color:#000;white-space:nowrap;transform:scaleX(0.905);transform-origin:0 0;">Ctrl + Insert: Thêm dòng; Ctrl + Delete: Xóa dòng</div>
<svg style="position:absolute;left:1230px;top:679px" width="14" height="14"><rect x="10" y="2" width="2" height="2" fill="#2c4676"/><rect x="6" y="6" width="2" height="2" fill="#2c4676"/><rect x="10" y="6" width="2" height="2" fill="#2c4676"/><rect x="2" y="10" width="2" height="2" fill="#2c4676"/><rect x="6" y="10" width="2" height="2" fill="#2c4676"/><rect x="10" y="10" width="2" height="2" fill="#2c4676"/></svg>
<div style="position:absolute;left:1219px;top:104px;width:15px;height:555px;background:#d9d9d9;"></div>
<div style="position:absolute;left:1219px;top:105px;width:14px;height:15px;background:linear-gradient(90deg,#f8f9fe,#ffffff 40%,#e2e2f6);"></div>
<svg style="position:absolute;left:1219px;top:105px" width="14" height="15"><path d="M2 9h9l-4.5-5z" fill="#000"/></svg>
<div style="position:absolute;left:1219px;top:187px;width:14px;height:345px;background:linear-gradient(90deg,#eef0fb,#fafbff 30%,#e6e8f8 70%,#dcdff5);"></div>
<div style="position:absolute;left:1222px;top:356px;width:8px;height:1px;background:#222;"></div>
<div style="position:absolute;left:1222px;top:358px;width:8px;height:1px;background:#222;"></div>
<div style="position:absolute;left:1222px;top:360px;width:8px;height:1px;background:#222;"></div>
<div style="position:absolute;left:1222px;top:362px;width:8px;height:1px;background:#222;"></div>
<div style="position:absolute;left:1219px;top:643px;width:14px;height:15px;background:linear-gradient(90deg,#f4f6fd,#ffffff 50%,#e4e8f8);"></div>
<svg style="position:absolute;left:1219px;top:643px" width="14" height="15"><path d="M2.5 5h9l-4.5 5z" fill="#000"/></svg>
<div style="position:absolute;left:1234px;top:104px;width:1px;height:556px;background:#8fa3db;"></div>
<div style="position:absolute;left:1235px;top:32px;width:7px;height:637px;background:#dbe1f9;"></div>
<svg style="position:absolute;left:0;top:0" width="1243" height="692"><defs><filter id="sh" x="-10%" y="-30%" width="120%" height="160%"><feGaussianBlur in="SourceAlpha" stdDeviation="2.2"/><feOffset dx="3" dy="4"/><feComponentTransfer><feFuncA type="linear" slope="0.55"/></feComponentTransfer><feMerge><feMergeNode/><feMergeNode in="SourceGraphic"/></feMerge></filter></defs><path filter="url(#sh)" d="M707 353 H1128 A63 21 0 0 1 1191 374 V393.5 A63 21 0 0 1 1128 414.5 H889 L807 452.5 L836 414.5 H707 A60 21 0 0 1 647 393.5 V374 A60 21 0 0 1 707 353 Z" fill="#ffffff" stroke="#e0473f" stroke-width="3" stroke-linejoin="miter"/></svg>
<div style="position:absolute;left:617px;width:600px;top:368.83px;line-height:13.2px;font-family:'Liberation Sans', sans-serif;font-size:13.2px;font-weight:normal;color:#e6463f;white-space:nowrap;text-align:center;">Bảng kê bán ra có dòng hóa đơn có</div>
<div style="position:absolute;left:617px;width:600px;top:385.50px;line-height:13px;font-family:'Liberation Sans', sans-serif;font-size:13px;font-weight:normal;color:#e6463f;white-space:nowrap;text-align:center;">cột <b>Thuế GTGT</b> khác cột <b>(DT chưa thuế GTGT*10% - Tiền thuế được giảm)</b></div>
<div style="position:absolute;left:141px;top:80px;width:133px;height:21px;border:3px solid #e8413c;"></div></body></html>
